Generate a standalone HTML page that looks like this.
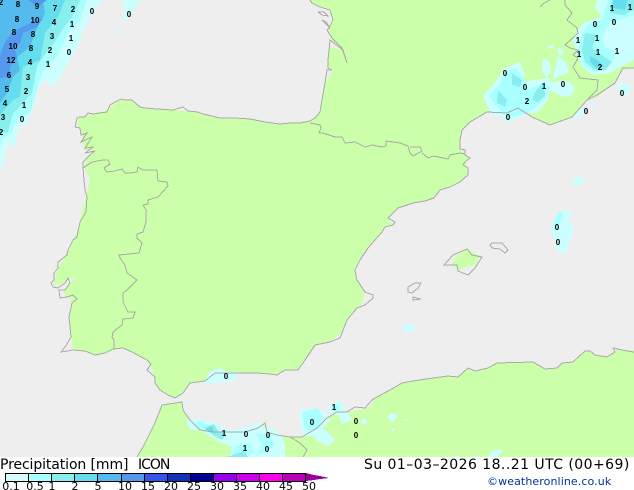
<!DOCTYPE html>
<html><head><meta charset="utf-8"><style>
html,body{margin:0;padding:0;background:#fff}
#w{position:relative;width:634px;height:490px;overflow:hidden;background:#fff}
svg{position:absolute;left:0;top:0}
.n{font:bold 8px "Liberation Sans",sans-serif;fill:#000;text-anchor:middle}
.t{position:absolute;white-space:pre;font-family:"DejaVu Sans",sans-serif;color:#000;line-height:1}
.l{font:11px "DejaVu Sans",sans-serif;fill:#000;text-anchor:middle}
</style></head><body><div id="w">
<svg width="634" height="490" viewBox="0 0 634 490" shape-rendering="crispEdges">
<rect width="634" height="457" fill="#eeeeee"/>
<g fill="#ccffaa">
<polygon points="310,0 634,0 634,68 623,70 615,83 597,97 587,100 572,117 550,125 532,117 518,110 507,113 487,112 470,122 462,130 460,149 465,155 470,158 465,162 468,168 468,175 460,182 450,187 440,190 434,198 425,201 413,203 398,208 388,218 393,225 385,227 382,232 368,248 360,260 355,270 357,280 365,292 362,305 357,308 347,320 342,333 330,342 315,345 305,360 298,370 285,370 277,375 257,373 230,373 215,373 205,381 190,383 183,393 173,398 165,392 160,390 155,383 152,368 147,360 132,352 123,348 105,353 95,355 85,351 73,350 71,337 69,317 72,303 70,297 66,297 63,291 69,285 77,276 63,283 53,286 58,268 67,255 73,240 77,232 82,212 86,197 90,180 84,167 88,155 96,150 84,150 82,135 78,125 78,118 95,113 108,110 120,99 132,100 140,107 157,109 173,110 198,112 220,118 250,119 280,124 310,121 320,112 322,100 325,83 332,72 327,66 330,47 342,50 330,40 332,38 327,30 333,20 330,10 320,7 312,3"/>
<polygon points="634,350 627,351 618,349 607,357 595,355 590,351 585,351 573,362 562,363 557,368 545,369 533,362 497,363 488,368 475,371 468,368 458,377 448,376 433,378 413,381 402,383 390,390 375,398 370,407 360,410 347,412 337,412 327,418 317,428 302,437 290,437 277,435 267,432 265,423 258,428 245,432 213,432 200,430 190,420 183,410 182,402 162,405 155,423 143,447 137,457 634,457"/>
<polygon points="452,263 457,255 468,249 480,256 475,265 458,270"/>
</g>
<!-- precipitation top-left -->
<polygon fill="#ccffff" points="102,0 95,10 83,30 78,47 68,63 60,77 53,88 45,80 38,88 33,107 28,122 18,130 15,147 8,143 2,167 0,170 0,0"/>
<polygon fill="#aaffff" points="87,0 80,20 68,33 63,45 57,57 42,73 35,97 30,113 17,120 12,132 2,140 0,147 0,0"/>
<polygon fill="#88eeee" points="80,0 72,17 62,30 55,42 43,57 37,67 32,93 23,103 13,113 8,132 0,133 0,0"/>
<polygon fill="#66ddee" points="65,0 58,17 45,33 42,50 40,60 23,67 20,97 13,100 0,115 0,0"/>
<polygon fill="#55bbee" points="43,0 45,13 37,28 30,47 17,57 20,70 13,77 7,93 0,103 0,0"/>
<polygon fill="#5599ee" points="43,18 37,27 23,33 20,43 15,50 17,57 10,67 10,77 0,78 0,55 5,42 12,33 20,28 33,22"/>
<polygon fill="#5599ee" points="28,0 47,0 40,5 35,5"/>
<polygon fill="#ccffff" points="122,0 140,0 133,10 128,18 122,20 125,10"/>
<polygon fill="#ccffff" points="115,30 120,31 119,34 115,33"/>
<!-- NE France / Italy area -->
<polygon fill="#ccffff" points="597,0 595,8 602,17 583,23 577,32 573,40 578,57 583,68 593,75 610,73 620,67 634,60 634,0"/>
<polygon fill="#aaffff" points="608,0 602,20 590,23 585,28 580,40 578,53 585,67 597,72 610,65 617,53 605,47 602,37 610,23 634,15 634,0"/>
<polygon fill="#88eeee" points="612,0 610,13 623,15 634,10 634,0"/>
<polygon fill="#66ddee" points="613,0 613,8 625,10 628,0"/>
<polygon fill="#88eeee" points="585,33 596,35 592,48 600,54 612,62 605,70 595,70 585,62 582,50"/>
<polygon fill="#66ddee" points="590,56 598,60 604,67 596,68 590,62"/>
<polygon fill="#ccffff" points="548,45 554,46 553,48 548,48"/>
<polygon fill="#ccffff" points="558,48 564,50 562,56 558,54"/>
<polygon fill="#ccffff" points="543,58 550,62 551,72 546,78 542,70"/>
<polygon fill="#ccffff" points="558,56 566,62 569,72 560,76 552,80 556,66"/>
<polygon fill="#ccffff" points="505,68 520,62 525,75 523,82 548,78 552,83 565,80 575,87 572,95 563,97 550,90 548,100 537,113 527,113 510,122 490,113 483,95 493,85"/>
<polygon fill="#aaffff" points="505,72 516,68 525,80 528,90 545,82 550,88 546,98 535,108 525,114 510,118 498,108 489,96 500,84"/>
<polygon fill="#88eeee" points="512,73 522,80 520,87 512,85"/>
<polygon fill="#88eeee" points="532,100 535,92 543,83 545,95 538,102"/>
<polygon fill="#88eeee" points="498,90 507,100 505,107 497,103"/>
<polygon fill="#ccffff" points="590,103 597,105 596,107 590,106"/>
<polygon fill="#ccffff" points="573,117 578,111 587,107 586,112 576,118"/>
<polygon fill="#ccffff" points="617,83 630,85 630,93 624,96 620,92"/>
<polygon fill="#ccffff" points="573,180 580,176 585,180 578,187 574,186"/>
<!-- central Med -->
<polygon fill="#ccffff" points="560,212 566,210 572,213 568,222 574,228 570,240 566,252 558,253 555,240 550,230 553,222"/>
<polygon fill="#aaffff" points="558,212 563,212 562,222 557,226 554,228 554,222"/>
<polygon fill="#ccffff" points="403,325 410,323 416,328 412,332 405,332"/>
<polygon fill="#ccffff" points="387,417 392,413 398,415 393,423"/>
<polygon fill="#ccffff" points="364,418 368,422 364,425 360,422"/>
<rect x="403" y="420" width="5" height="1" fill="#ccffff"/>
<polygon fill="#ccffff" points="393,428 395,430 393,432 391,430"/>
<!-- South Spain / N Africa -->
<polygon fill="#ccffff" points="205,381 209,372 220,368 228,372 240,372 232,382 215,382 204,386"/>
<polygon fill="#ccffff" points="186,420 198,419 215,423 232,431 262,423 266,436 282,436 285,444 270,448 255,443 235,448 220,442 200,430 190,430"/>
<polygon fill="#aaffff" points="196,422 202,421 212,428 205,432 197,428"/>
<polygon fill="#88eeee" points="204,428 214,424 218,431 226,434 222,440 214,436"/>
<polygon fill="#66ddee" points="206,429 212,426 214,432 208,432"/>
<polygon fill="#ccffff" points="240,432 265,428 272,428 282,436 285,444 285,457 230,457 232,445"/>
<polygon fill="#aaffff" points="256,434 270,434 275,446 266,452 256,456 262,444"/>
<polygon fill="#aaffff" points="235,446 250,443 254,452 248,457 232,457"/>
<polygon fill="#88eeee" points="227,457 244,451 248,457"/>
<polygon fill="#ccffff" points="300,410 312,408 325,412 330,420 322,430 316,436 304,436 300,420"/>
<polygon fill="#aaffff" points="302,412 318,408 322,416 320,426 310,432 304,426"/>
<polygon fill="#ccffff" points="328,406 340,400 346,410 340,415 330,414"/>
<polygon fill="#aaffff" points="332,406 338,404 340,410 334,412"/>
<polygon fill="#ccffff" points="338,414 348,412 352,420 342,424"/>
<polygon fill="#ccffff" points="314,430 326,430 335,440 328,446 316,440"/>
<polygon fill="#ccffff" points="488,457 492,451 501,449 503,451 497,457"/>
<rect x="452" y="456" width="8" height="1" fill="#ccffff"/><rect x="472" y="456" width="8" height="1" fill="#ccffff"/>
<!-- coastlines -->
<g fill="none" stroke="#aaaaaa" stroke-width="1">
<polyline points="75,127 77,118 79,117 85,117 88,113 93,114 107,112 110,105 115,102 121,99 125,100 132,100 140,107 145,108 157,109 173,110 183,107 188,111 198,112 203,114 220,118 235,118 250,119 265,122 280,124 290,123 300,123 310,121 315,118 320,112 322,100 325,83 327,70 332,70 328,68 328,60 330,40 343,50 347,63 342,48 332,38 327,30 329,28 333,20 330,10 320,7 312,3 310,0"/>
<polyline points="318,12 324,12 328,16 322,15 318,12"/>
<polyline points="322,20 326,22 330,28 326,24 322,20"/>
<polyline points="310,123 320,125 321,128 319,133 323,133 335,137 342,137 345,143 355,142 365,147 372,145 382,147 386,146 386,141 400,143 408,146 410,153 413,156 422,151 420,147 410,147"/>
<polyline points="422,153 428,158 433,156 443,158 448,159 450,155 460,153 465,154"/>
<polyline points="487,112 470,122 462,130 460,140 460,149 465,150 465,155 470,158 465,162 463,165 468,168 468,175 460,182 450,187 440,190 434,198 425,201 413,203 398,208 388,218 395,222 393,225 385,227 382,232 368,248 360,260 355,270 357,280 365,292 373,295 373,298 365,305 357,308 347,320 342,333 340,338 330,342 315,345 305,360 298,370 290,370 285,370 277,375 270,374 257,373 243,373 230,373 215,373 205,381 190,383 183,393 175,398 168,395 160,390 155,383 155,377 147,370 151,364 147,360 132,352 123,348 113,349 105,353 95,355 85,351 73,350 61,352 65,347 71,337 69,317 72,303 77,299 73,295 67,297 60,298 59,290 65,290 70,283 68,278 65,283 58,288 53,287 51,283 54,280 54,273 58,268 58,262 67,255 68,250 73,240 77,237 80,222 86,212 87,197 85,190 84,180 83,167 83,162 90,155 95,151 85,153 93,147 85,148 92,137 81,142 87,133 81,135 80,128 75,127"/>
<polyline points="83,168 92,162 103,160 108,160 110,164 104,168 107,172 115,171 122,169 125,173 130,173 137,172 138,167 143,170 157,170 158,181 167,182 168,186 158,197 148,200 148,204 143,205 146,210 146,222 143,232 137,234 137,238 142,243 139,253 119,255 120,258 125,265 127,273 137,280 127,290 123,293 123,302 128,312 135,312 133,318 123,319 122,325 113,332 112,337 114,340 114,349"/>
<polyline points="137,457 143,447 155,423 162,405 182,402 183,410 190,420 200,430 213,432 230,432 245,432 258,428 265,423 267,432 277,435 290,437 302,437 317,428 327,418 337,412 347,412 355,407 365,408 372,400 375,398 390,390 402,383 413,381 433,378 448,376 458,377 468,368 475,371 488,368 497,363 533,362 545,369 557,368 562,363 573,362 585,351 590,351 595,355 607,357 615,352 613,348 618,349 627,351 634,352"/>
<polyline points="290,437 300,443 307,450 303,457"/>
<polygon points="444,265 453,255 467,249 472,255 482,257 475,268 468,275 458,271 457,265"/>
<polygon points="490,245 492,243 502,243 508,250 505,253 500,249 492,248"/>
<polygon points="408,292 408,287 415,283 421,283 418,288 412,293"/>
<polygon points="413,297 413,300 421,299"/>
<!-- Gulf of Lion / Ligurian coast -->
<polyline points="487,112 507,113 518,108 532,117 550,125 572,117 587,100 597,95 615,83 623,68 634,68"/>
<polyline points="565,0 565,5 572,13 567,20 577,28 578,33 565,45 570,48 578,50 573,55 578,58 573,67 580,78 598,80 597,90 587,100"/>
<polyline points="540,7 544,3 550,0"/>
</g>
<!-- legend -->
<g>
<rect x="5" y="473" width="23" height="8" fill="#d5fdfc"/><rect x="28" y="473" width="23" height="8" fill="#aaffff"/><rect x="51" y="473" width="23" height="8" fill="#88eeee"/><rect x="74" y="473" width="23" height="8" fill="#66ddee"/><rect x="97" y="473" width="24" height="8" fill="#55bbee"/><rect x="121" y="473" width="23" height="8" fill="#5599ee"/><rect x="144" y="473" width="23" height="8" fill="#3355ee"/><rect x="167" y="473" width="23" height="8" fill="#1133bb"/><rect x="190" y="473" width="23" height="8" fill="#000099"/><rect x="213" y="473" width="23" height="8" fill="#9900ee"/><rect x="236" y="473" width="23" height="8" fill="#cc00ee"/><rect x="259" y="473" width="23" height="8" fill="#ff00ee"/><rect x="282" y="473" width="24" height="8" fill="#bb00bb"/>
<polygon points="306,473 314,475 320,476 329,478 320,479 314,480 306,481" fill="#990099"/>
<path fill="none" stroke="#000" d="M5.5 473.5H305.5V481.5H5.5ZM28.5 473V481M51.5 473V481M74.5 473V481M97.5 473V481M121.5 473V481M144.5 473V481M167.5 473V481M190.5 473V481M213.5 473V481M236.5 473V481M259.5 473V481M282.5 473V481"/>
</g>
<g>
<text class="l" x="11" y="490">0.1</text><text class="l" x="35" y="490">0.5</text><text class="l" x="52" y="490">1</text><text class="l" x="75" y="490">2</text><text class="l" x="98" y="490">5</text><text class="l" x="125" y="490">10</text><text class="l" x="148" y="490">15</text><text class="l" x="171" y="490">20</text><text class="l" x="194" y="490">25</text><text class="l" x="217" y="490">30</text><text class="l" x="240" y="490">35</text><text class="l" x="263" y="490">40</text><text class="l" x="286" y="490">45</text><text class="l" x="309" y="490">50</text>
</g>
<!-- numbers -->
<g>
<text class="n" x="1" y="5">2</text><text class="n" x="18" y="7">8</text><text class="n" x="37" y="9">9</text><text class="n" x="55" y="11">7</text><text class="n" x="73" y="12">2</text><text class="n" x="92" y="14">0</text><text class="n" x="129" y="17">0</text>
<text class="n" x="17" y="22">8</text><text class="n" x="35" y="23">10</text><text class="n" x="54" y="25">4</text><text class="n" x="72" y="27">1</text>
<text class="n" x="14" y="35">8</text><text class="n" x="33" y="37">8</text><text class="n" x="52" y="39">3</text><text class="n" x="71" y="41">1</text>
<text class="n" x="13" y="49">10</text><text class="n" x="31" y="51">8</text><text class="n" x="50" y="53">2</text><text class="n" x="69" y="55">0</text>
<text class="n" x="11" y="63">12</text><text class="n" x="30" y="65">4</text><text class="n" x="48" y="67">1</text>
<text class="n" x="9" y="78">6</text><text class="n" x="28" y="80">3</text><text class="n" x="7" y="92">5</text><text class="n" x="26" y="94">2</text>
<text class="n" x="5" y="106">4</text><text class="n" x="24" y="108">1</text><text class="n" x="3" y="120">3</text><text class="n" x="22" y="122">0</text><text class="n" x="1" y="135">2</text>
<text class="n" x="612" y="11">1</text><text class="n" x="630" y="10">1</text><text class="n" x="595" y="27">0</text><text class="n" x="614" y="25">0</text><text class="n" x="578" y="43">1</text><text class="n" x="597" y="41">1</text><text class="n" x="579" y="57">1</text><text class="n" x="598" y="55">1</text><text class="n" x="617" y="54">1</text><text class="n" x="600" y="70">2</text>
<text class="n" x="505" y="76">0</text><text class="n" x="525" y="90">0</text><text class="n" x="544" y="89">1</text><text class="n" x="563" y="87">0</text><text class="n" x="527" y="104">2</text><text class="n" x="622" y="96">0</text><text class="n" x="586" y="114">0</text><text class="n" x="508" y="120">0</text>
<text class="n" x="557" y="230">0</text><text class="n" x="558" y="245">0</text>
<text class="n" x="226" y="379">0</text><text class="n" x="334" y="410">1</text><text class="n" x="312" y="425">0</text><text class="n" x="356" y="424">0</text><text class="n" x="356" y="438">0</text><text class="n" x="224" y="436">1</text><text class="n" x="246" y="437">0</text><text class="n" x="268" y="438">0</text><text class="n" x="245" y="451">1</text><text class="n" x="267" y="452">0</text>
</g>
</svg>
<div class="t" style="left:0;top:458px;font-size:14px;letter-spacing:-.1px">Precipitation [mm]</div>
<div class="t" style="left:138px;top:458px;font-size:14px;letter-spacing:-1px">ICON</div>
<div class="t" style="left:364px;top:458px;font-size:14px;letter-spacing:.45px">Su 01–03–2026 18..21 UTC (00+69)</div>
<div class="t" style="left:487px;top:476px;font-size:11px;color:#003399;letter-spacing:.1px">©weatheronline.co.uk</div>
</div></body></html>
